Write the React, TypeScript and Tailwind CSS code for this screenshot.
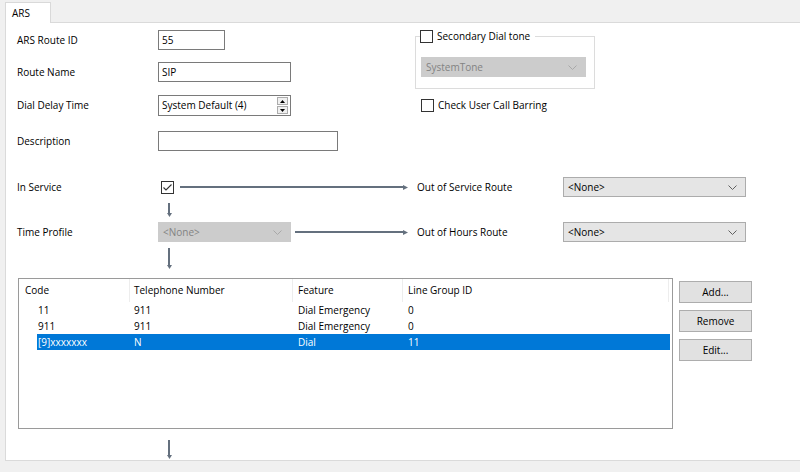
import React from 'react';

const font = { fontFamily: '"Open Sans", "Noto Sans", sans-serif' };

const Chevron: React.FC<{ color?: string }> = ({ color = '#606060' }) => (
  <svg width="9" height="5" viewBox="0 0 9 5" className="shrink-0">
    <path d="M0.5 0.5 L4.5 4.5 L8.5 0.5" fill="none" stroke={color} strokeWidth="1" />
  </svg>
);

const Select: React.FC<{ value: string; width: string; disabled?: boolean }> = ({ value, width, disabled }) => (
  <div
    className={`${width} h-[20px] flex items-center justify-between pl-[4px] pr-[8px] border ${
      disabled ? 'bg-[#cccccc] border-[#cccccc] text-[#838383]' : 'bg-[#e5e5e5] border-[#acacac] text-black'
    }`}
  >
    <span>{value}</span>
    <Chevron color={disabled ? '#a8a8a8' : '#606060'} />
  </div>
);

const TextBox: React.FC<{ value?: string; width: string }> = ({ value, width }) => (
  <div className={`${width} h-[20px] flex items-center px-[3px] border border-[#7a7a7a] bg-white`}>{value}</div>
);

const CheckBox: React.FC<{ checked?: boolean }> = ({ checked }) => (
  <div className="w-[13px] h-[13px] border border-[#333333] bg-white flex items-center justify-center shrink-0">
    {checked && (
      <svg width="11" height="11" viewBox="0 0 11 11">
        <path d="M1.5 5.5 L4 8 L9.5 2.5" fill="none" stroke="#333" strokeWidth="1.1" />
      </svg>
    )}
  </div>
);

const ArrowRight: React.FC = () => (
  <div className="flex-1 flex items-center">
    <div className="flex-1 h-[2px] bg-[#64707e]" />
    <svg width="5" height="5" viewBox="0 0 5 5" className="shrink-0">
      <path d="M0 0 L5 2.5 L0 5 Z" fill="#64707e" />
    </svg>
  </div>
);

const ArrowDown: React.FC<{ h: string }> = ({ h }) => (
  <div className={`flex flex-col items-center w-[4px] ${h}`}>
    <div className="flex-1 w-[2px] bg-[#64707e]" />
    <svg width="5" height="4" viewBox="0 0 5 4" className="shrink-0">
      <path d="M0 0 L5 0 L2.5 4 Z" fill="#64707e" />
    </svg>
  </div>
);

const Button: React.FC<{ label: string }> = ({ label }) => (
  <div className="w-[73px] h-[22px] flex items-center justify-center bg-[#e1e1e1] border border-[#adadad]">{label}</div>
);

const rows = [
  { code: '11', tel: '911', feature: 'Dial Emergency', lg: '0' },
  { code: '911', tel: '911', feature: 'Dial Emergency', lg: '0' },
  { code: '[9]xxxxxxx', tel: 'N', feature: 'Dial', lg: '11', selected: true },
];

export default function App() {
  return (
    <div className="w-[800px] h-[472px] bg-[#f0f0f0] pt-[2px] pl-[5px] text-[10px] text-black overflow-hidden" style={font}>
      {/* tab */}
      <div className="relative z-10 w-[46px] h-[21px] bg-white border border-b-0 border-[#d9d9d9] pl-[6px] flex items-center">
        ARS
      </div>
      {/* panel */}
      <div className="-mt-px w-[800px] h-[439px] bg-white border border-[#dadada]">
        {/* top section */}
        <div className="flex">
          <div className="w-[409px] pl-[11px] pt-[7px]">
            <div className="flex items-center">
              <div className="w-[141px]">ARS Route ID</div>
              <TextBox value="55" width="w-[67px]" />
            </div>
            <div className="flex items-center mt-[12px]">
              <div className="w-[141px]">Route Name</div>
              <TextBox value="SIP" width="w-[133px]" />
            </div>
            <div className="flex items-center mt-[13px]">
              <div className="w-[141px]">Dial Delay Time</div>
              <div className="w-[133px] h-[21px] flex items-center justify-between pl-[3px] pr-[2px] border border-[#7a7a7a] bg-white">
                <span>System Default (4)</span>
                <div className="flex flex-col gap-[1px]">
                  <div className="w-[11px] h-[8px] bg-[#f0f0f0] border border-[#acacac] flex items-center justify-center">
                    <svg width="5" height="3" viewBox="0 0 5 3"><path d="M0 3 L2.5 0 L5 3 Z" fill="#000" /></svg>
                  </div>
                  <div className="w-[11px] h-[8px] bg-[#f0f0f0] border border-[#acacac] flex items-center justify-center">
                    <svg width="5" height="3" viewBox="0 0 5 3"><path d="M0 0 L5 0 L2.5 3 Z" fill="#000" /></svg>
                  </div>
                </div>
              </div>
            </div>
            <div className="flex items-center mt-[15px]">
              <div className="w-[141px]">Description</div>
              <TextBox width="w-[180px]" />
            </div>
          </div>
          <div className="pt-[13px]">
            <div className="relative w-[180px] h-[53px] border border-[#dcdcdc]">
              <div className="absolute -top-[8px] left-[4px] bg-white pr-[5px] flex items-center gap-[4px]">
                <CheckBox />
                <span>Secondary Dial tone</span>
              </div>
              <div className="mt-[20px] ml-[5px]">
                <Select value="SystemTone" width="w-[165px]" disabled />
              </div>
            </div>
            <div className="flex items-center gap-[4px] mt-[9px] ml-[6px]">
              <CheckBox />
              <span>Check User Call Barring</span>
            </div>
          </div>
        </div>

        {/* routing section */}
        <div className="pl-[11px] mt-[26px]">
          <div className="flex items-center h-[20px]">
            <div className="w-[141px]">In Service</div>
            <div className="w-[259px] flex items-center pr-[9px]">
              <div className="ml-[3px] mr-[6px]"><CheckBox checked /></div>
              <ArrowRight />
            </div>
            <div className="w-[146px]">Out of Service Route</div>
            <Select value="<None>" width="w-[183px]" />
          </div>
          <div className="ml-[150px] mt-[6px]"><ArrowDown h="h-[14px]" /></div>
          <div className="flex items-center h-[20px] mt-[5px]">
            <div className="w-[141px]">Time Profile</div>
            <div className="w-[259px] flex items-center pr-[9px]">
              <Select value="<None>" width="w-[133px]" disabled />
              <div className="w-[4px]" />
              <ArrowRight />
            </div>
            <div className="w-[146px]">Out of Hours Route</div>
            <Select value="<None>" width="w-[183px]" />
          </div>
          <div className="ml-[150px] mt-[6px]"><ArrowDown h="h-[21px]" /></div>
        </div>

        {/* table + buttons */}
        <div className="flex gap-[6px] pl-[12px] mt-[9px]">
          <div className="w-[655px] h-[151px] border border-[#9a9a9a] bg-white">
            <div className="flex h-[23px] items-center">
              <div className="w-[111px] pl-[6px] h-full flex items-center border-r border-[#ededed]">Code</div>
              <div className="w-[163px] pl-[4px] h-full flex items-center border-r border-[#ededed]">Telephone Number</div>
              <div className="w-[110px] pl-[5px] h-full flex items-center border-r border-[#ededed]">Feature</div>
              <div className="w-[266px] pl-[5px] h-full flex items-center border-r border-[#ededed]">Line Group ID</div>
            </div>
            {rows.map((r, i) => (
              <div key={i} className="flex h-[16px] items-center pl-[18px] pr-[2px]">
                <div className={`flex-1 flex h-full items-center ${r.selected ? 'bg-[#0078d7] text-white' : ''}`}>
                  <div className="w-[93px] pl-[1px]">{r.code}</div>
                  <div className="w-[163px] pl-[4px]">{r.tel}</div>
                  <div className="w-[110px] pl-[5px]">{r.feature}</div>
                  <div className="flex-1 pl-[5px]">{r.lg}</div>
                </div>
              </div>
            ))}
          </div>
          <div className="flex flex-col gap-[7px] pt-[3px]">
            <Button label="Add..." />
            <Button label="Remove" />
            <Button label="Edit..." />
          </div>
        </div>

        <div className="ml-[161px] mt-[11px]"><ArrowDown h="h-[19px]" /></div>
      </div>
    </div>
  );
}
